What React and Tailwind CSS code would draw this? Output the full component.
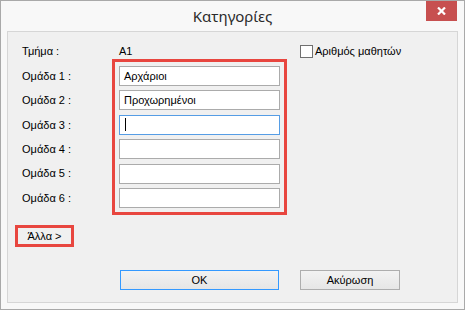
import React from "react";

const groups = ["Αρχάριοι", "Προχωρημένοι", "", "", "", ""];

const App = () => {
  return (
    <div className="w-[465px] h-[310px] bg-white">
      <div className="w-[465px] h-[310px] border border-[#a9a9a9] bg-[#f8f8f8] flex flex-col font-['Liberation_Sans',sans-serif] text-[11px] text-black">
        {/* title bar */}
        <div className="relative h-[30px] flex items-center justify-center">
          <span className="font-['Noto_Sans',sans-serif] text-[15px] text-[#2b2b2b] leading-none pt-[1px]">
            Κατηγορίες
          </span>
          <div className="absolute right-[7px] top-0 w-[31px] h-[20px] bg-[#c75050] flex items-center justify-center">
            <svg width="9" height="8" viewBox="0 0 9 8">
              <path d="M1 0.5 L8 7.5 M8 0.5 L1 7.5" stroke="white" strokeWidth="2.2" />
            </svg>
          </div>
        </div>

        {/* client area */}
        <div className="mx-[6px] h-[272px] border border-[#d6d6d6] bg-[#f0f0f0] flex flex-col pl-[14px] pt-[12px]">
          <div className="flex items-center h-[15px]">
            <span className="w-[97px]">Τμήμα :</span>
            <span className="w-[181px]">A1</span>
            <label className="flex items-center gap-[2px]">
              <span className="w-[13px] h-[13px] border border-[#707070] bg-white" />
              <span>Αριθμός μαθητών</span>
            </label>
          </div>

          <div className="flex mt-[0px]">
            <div className="w-[90px] flex flex-col gap-[4.4px] pt-[7px]">
              {groups.map((_, i) => (
                <div key={i} className="h-[20px] flex items-center">
                  Ομάδα {i + 1} :
                </div>
              ))}
            </div>
            <div className="w-[175px] border-[3px] border-[#e8463f] p-[4px] flex flex-col gap-[4.4px]">
              {groups.map((g, i) => (
                <div
                  key={i}
                  className={
                    i === 2
                      ? "h-[20px] w-[161px] border border-[#569de5] bg-white flex items-center pl-[4px]"
                      : "h-[20px] w-[161px] border border-[#ababab] bg-white flex items-center pl-[4px]"
                  }
                >
                  {i === 2 ? (
                    <span className="w-[1px] h-[13px] bg-black ml-[1px]" />
                  ) : (
                    <span>{g}</span>
                  )}
                </div>
              ))}
            </div>
          </div>

          <div className="mt-[10px] -ml-[7px] w-[59px] h-[22px] border-[3px] border-[#e8463f] flex items-center justify-center">
            Άλλα &gt;
          </div>

          <div className="flex mt-[23px] ml-[98px] gap-[21px]">
            <button className="w-[159px] h-[20px] border border-[#3399ff] bg-gradient-to-b from-[#f2f2f2] to-[#e6e6e6] text-[11px]">
              OK
            </button>
            <button className="w-[100px] h-[20px] border border-[#adadad] bg-gradient-to-b from-[#f2f2f2] to-[#e6e6e6] text-[11px]">
              Ακύρωση
            </button>
          </div>
        </div>
      </div>
    </div>
  );
};

export default App;
